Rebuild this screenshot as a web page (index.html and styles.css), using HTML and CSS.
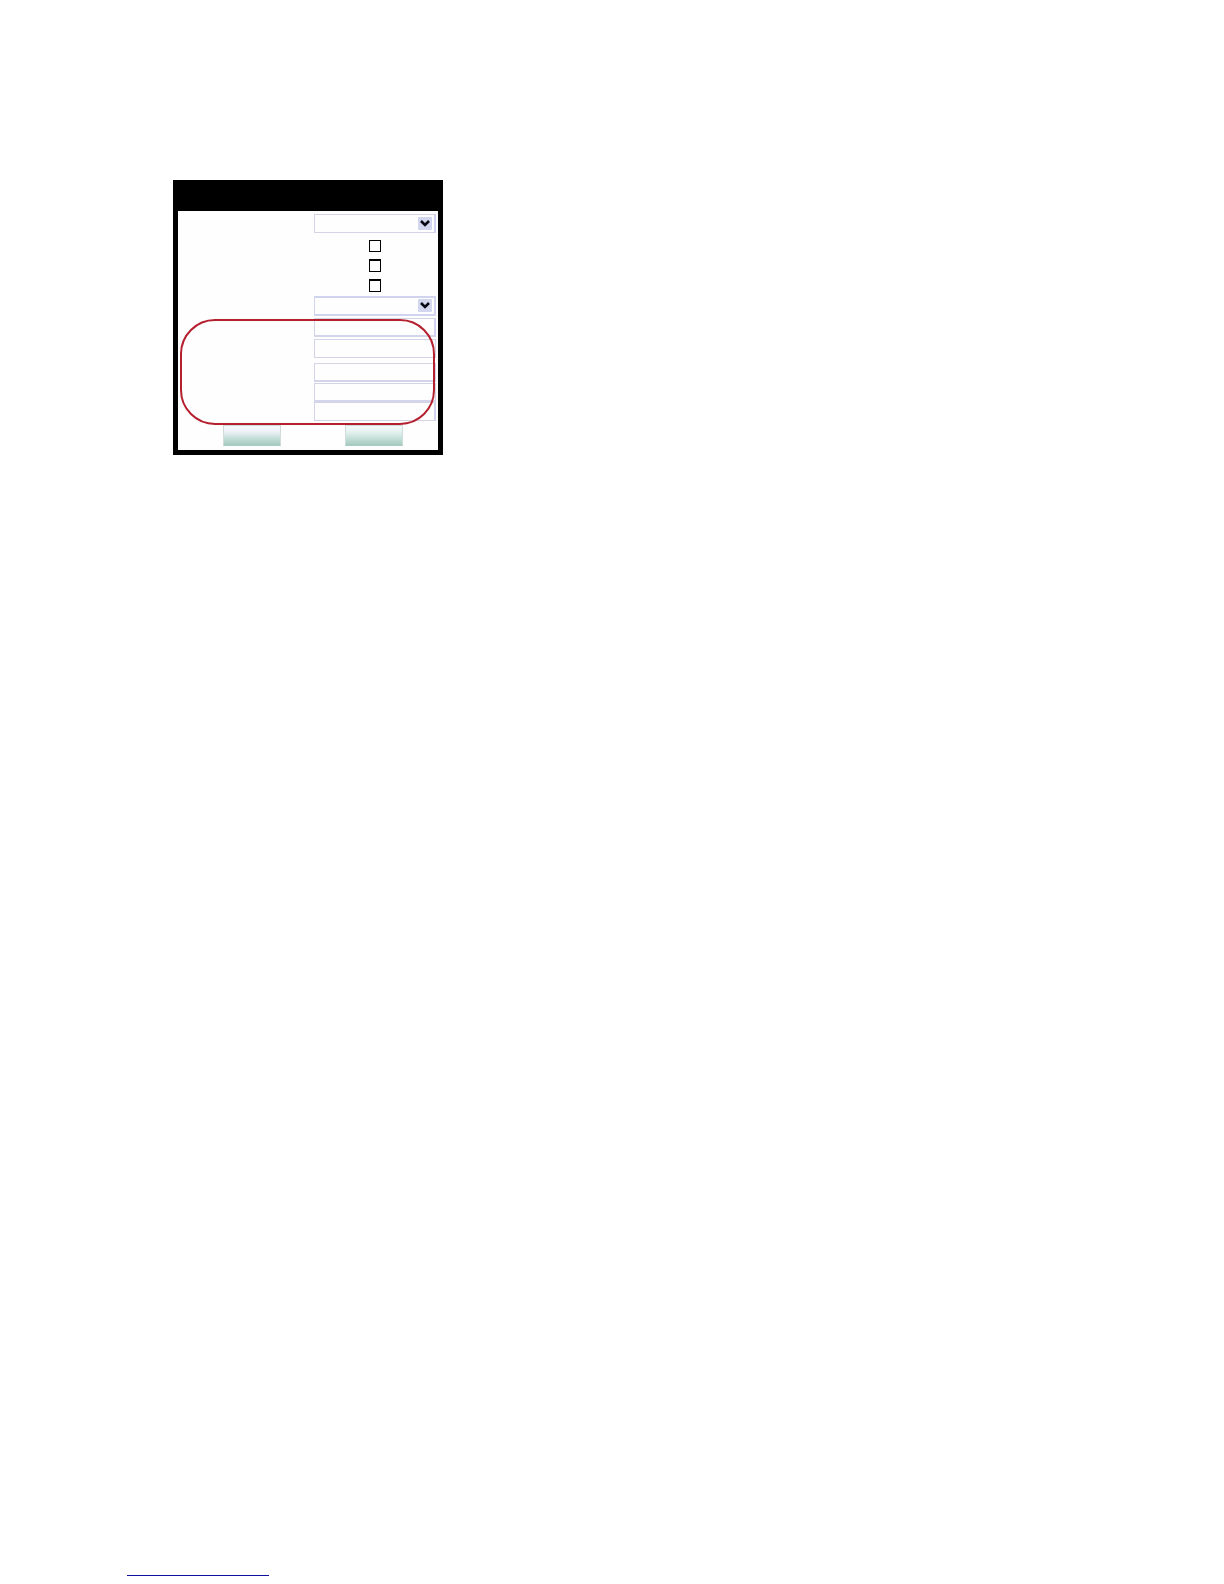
FILE: index.html
```html
<!DOCTYPE html>
<html lang="en">
<head>
    <meta charset="UTF-8">
    <title></title>
    <link rel="stylesheet" href="styles.css">
</head>
<body>
    <main class="content">
        <form class="panel">
            <div class="panel-header"></div>
            <div class="panel-body">
                <div class="row">
                    <label for="type"></label>
                    <div class="select">
                        <select id="type" aria-label="Type"><option></option></select>
                        <svg class="arrow" viewBox="0 0 14 13"><rect width="14" height="13" rx="1" fill="#d2d6ee"/><path d="M3 4 L7 8 L11 4" fill="none" stroke="#080814" stroke-width="2.6"/></svg>
                    </div>
                </div>
                <!-- check boxes -->
                <div class="checks">
                    <div class="row check-row">
                        <label for="check1"></label>
                        <input type="checkbox" class="check first" id="check1" aria-label="Option 1">
                    </div>
                    <div class="row check-row">
                        <label for="check2"></label>
                        <input type="checkbox" class="check" id="check2" aria-label="Option 2">
                    </div>
                    <div class="row check-row">
                        <label for="check3"></label>
                        <input type="checkbox" class="check" id="check3" aria-label="Option 3">
                    </div>
                </div>
                <div class="row">
                    <label for="mode"></label>
                    <div class="select">
                        <select id="mode" class="thick" aria-label="Mode"><option></option></select>
                        <svg class="arrow" viewBox="0 0 14 13"><rect width="14" height="13" rx="1" fill="#d2d6ee"/><path d="M3 4 L7 8 L11 4" fill="none" stroke="#080814" stroke-width="2.6"/></svg>
                    </div>
                </div>
                <!-- text fields inside the red outline -->
                <div class="group">
                    <div class="row">
                        <label for="field1"></label>
                        <input type="text" class="field wide shaded" id="field1" aria-label="Field 1">
                    </div>
                    <div class="row space">
                        <label for="field2"></label>
                        <input type="text" class="field" id="field2" aria-label="Field 2">
                    </div>
                    <div class="row space-large">
                        <label for="field3"></label>
                        <input type="text" class="field shaded" id="field3" aria-label="Field 3">
                    </div>
                    <div class="row space-small">
                        <label for="field4"></label>
                        <input type="text" class="field shaded" id="field4" aria-label="Field 4">
                    </div>
                    <div class="row">
                        <label for="field5"></label>
                        <input type="text" class="field wide" id="field5" aria-label="Field 5">
                    </div>
                </div>
                <div class="buttons">
                    <button type="button" class="btn" aria-label="Save"></button>
                    <button type="button" class="btn btn-green" aria-label="Cancel"></button>
                </div>
            </div>
        </form>
    </main>
    <footer class="footer">
        <a class="footer-link" href="#" aria-label="Home"></a>
    </footer>
</body>
</html>
```

FILE: styles.css
```css
* {
    box-sizing: border-box;
    margin: 0;
    padding: 0;
}

body {
    display: flex;
    flex-direction: column;
    min-height: 100vh;
    background: #fff;
    font-family: "Liberation Sans", Arial, sans-serif;
    font-size: 12px;
}

.content {
    padding: 180px 0 0 173px;
}

.panel {
    width: 270px;
    border: 5px solid #000;
    background: #fefefe;
}

.panel-header {
    height: 26px;
    background: #000;
}

.panel-body {
    padding: 3px 0 4px;
}

.row {
    display: grid;
    grid-template-columns: 1fr 122px;
    padding-right: 2px;
}

.select {
    position: relative;
    display: flex;
}

.select select,
.field {
    width: 100%;
    height: 19px;
    border: 1px solid #d3d4e6;
    border-radius: 0;
    background: #fefefe;
    appearance: none;
    outline: none;
}

.select select {
    border-right: 2px solid #d0d4ef;
}

.select .thick {
    height: 20px;
    border-color: #d0d4ef;
    border-top-width: 2px;
    border-bottom-width: 2px;
}

.arrow {
    position: absolute;
    top: 3px;
    right: 4px;
    width: 14px;
    height: 13px;
    pointer-events: none;
}

.checks {
    padding-top: 3px;
}

.check-row {
    height: 20px;
    padding-bottom: 4px;
    align-items: end;
}

.check {
    justify-self: center;
    width: 12px;
    height: 13px;
    border: 1px solid #000;
    border-top-width: 2px;
    background: #fff;
    appearance: none;
}

.check.first {
    height: 12px;
    border-top-width: 1px;
}

.group {
    position: relative;
    padding-top: 2px;
}

.group::after {
    content: "";
    position: absolute;
    top: 3px;
    right: 3px;
    bottom: -4px;
    left: 2px;
    border: 2px solid #b5202f;
    border-radius: 35px;
    pointer-events: none;
}

.field.wide {
    border-right: 2px solid #d0d4ef;
}

.field.shaded {
    border-bottom: 2px solid #d3d5ea;
}

.space {
    margin-top: 2px;
}

.space-large {
    margin-top: 5px;
}

.space-small {
    margin-top: 1px;
}

.buttons {
    display: flex;
    justify-content: space-between;
    padding: 4px 35px 0 45px;
}

.btn {
    width: 58px;
    height: 21px;
    border: 1px solid #cfdcdc;
    border-bottom-color: #a9cbc1;
    background: linear-gradient(#f5f8fc 0%, #eef2f8 30%, #c9e0db 60%, #a4cbc0 100%);
}

.btn-green {
    background: linear-gradient(#f5fbfa 0%, #e2f0ed 35%, #c5dfd8 65%, #a4cbc0 100%);
}

.footer {
    margin-top: auto;
    padding: 0 0 8px 127px;
}

.footer-link {
    display: block;
    width: 142px;
    height: 14px;
    border-bottom: 1px solid #10109a;
}
```
